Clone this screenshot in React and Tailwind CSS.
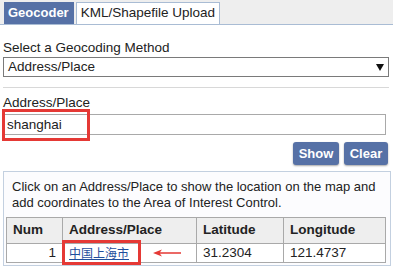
const tabBase = 'h-[22px] flex items-center';

const HeaderCell = ({ children, className = '' }) => (
  <th className={`border border-[#a9a9a9] bg-[#eeeeee] px-[6px] text-left font-bold ${className}`}>{children}</th>
);

const Cell = ({ children, className = '' }) => (
  <td className={`border border-[#a9a9a9] px-[6px] ${className}`}>{children}</td>
);

export default function App() {
  return (
    <div className="w-[393px] h-[268px] overflow-hidden bg-white text-[13.5px] text-[#222] font-['Liberation_Sans',Arial,sans-serif]">
      <div className="h-[25px] bg-[#eeeeee] border-b border-[#a9bcd4] flex items-end pl-[4px] gap-[2px]">
        <div className={`${tabBase} pl-[4px] pr-[5px] bg-[#5671a6] text-white font-bold text-[13px]`}>Geocoder</div>
        <div className={`${tabBase} px-[4px] bg-white border border-b-0 border-[#a9bcd4] text-[#222]`}>KML/Shapefile Upload</div>
      </div>

      <div className="px-[3px]">
        <div className="mt-[15px] leading-[16px]">Select a Geocoding Method</div>
        <div className="h-[20px] mt-[1px] w-[386px] border border-[#7a7a7a] flex items-center justify-between pl-[4px] pr-[4px]">
          <span className="leading-[16px]">Address/Place</span>
          <svg width="8" height="7" viewBox="0 0 8 7"><path d="M0 0h8L4 7z" fill="#111" /></svg>
        </div>
        <div className="mt-[10px] h-px w-[386px] bg-[#d8d8d8]" />

        <div className="mt-[7px] leading-[16px]">Address/Place</div>
        <div className="relative mt-[3px]">
          <div className="h-[21px] w-[383px] border border-[#a9a9a9] flex items-center pl-[3px] leading-[16px]">shanghai</div>
          <div className="absolute left-[-1px] top-[-5px] w-[88px] h-[32px] border-[3px] border-[#e53935]" />
        </div>

        <div className="mt-[7px] flex justify-end gap-[5px] pr-[2px]">
          <button className="h-[23px] w-[46px] rounded-[3px] bg-[#5671a6] text-white font-bold text-[13px] shadow-[0_1px_2px_rgba(0,0,0,0.35)]">Show</button>
          <button className="h-[23px] w-[44px] rounded-[3px] bg-[#5671a6] text-white font-bold text-[13px] shadow-[0_1px_2px_rgba(0,0,0,0.35)]">Clear</button>
        </div>

        <div className="mt-[6px] w-[388px] h-[95px] border border-[#c3d0e0] bg-[#fcfcfe] px-[2px]">
          <p className="px-[6px] pt-[7px] leading-[16px] text-[13px]">
            Click on an Address/Place to show the location on the map and add coordinates to the Area of Interest Control.
          </p>
          <table className="mt-[6px] w-[380px] border-collapse bg-white">
            <thead>
              <tr className="h-[26px]">
                <HeaderCell className="w-[56px]">Num</HeaderCell>
                <HeaderCell className="w-[134px]">Address/Place</HeaderCell>
                <HeaderCell className="w-[87px]">Latitude</HeaderCell>
                <HeaderCell>Longitude</HeaderCell>
              </tr>
            </thead>
            <tbody>
              <tr className="h-[19px] leading-[16px]">
                <Cell className="text-right">1</Cell>
                <Cell>
                  <div className="relative flex items-center">
                    <a className="text-[#1f4e9c] underline font-['Noto_Sans_CJK_SC',sans-serif] text-[12px]" href="#">中国上海市</a>
                    <div className="absolute left-[-7px] top-[-5px] w-[79px] h-[25px] border-[3px] border-[#e53935]" />
                    <svg className="absolute left-[84px] top-[4px]" width="28" height="8" viewBox="0 0 28 8">
                      <path d="M0 4L9 0.5L7 3.2H28V4.8H7L9 7.5Z" fill="#e53935" />
                    </svg>
                  </div>
                </Cell>
                <Cell>31.2304</Cell>
                <Cell>121.4737</Cell>
              </tr>
            </tbody>
          </table>
        </div>
      </div>
    </div>
  );
}
